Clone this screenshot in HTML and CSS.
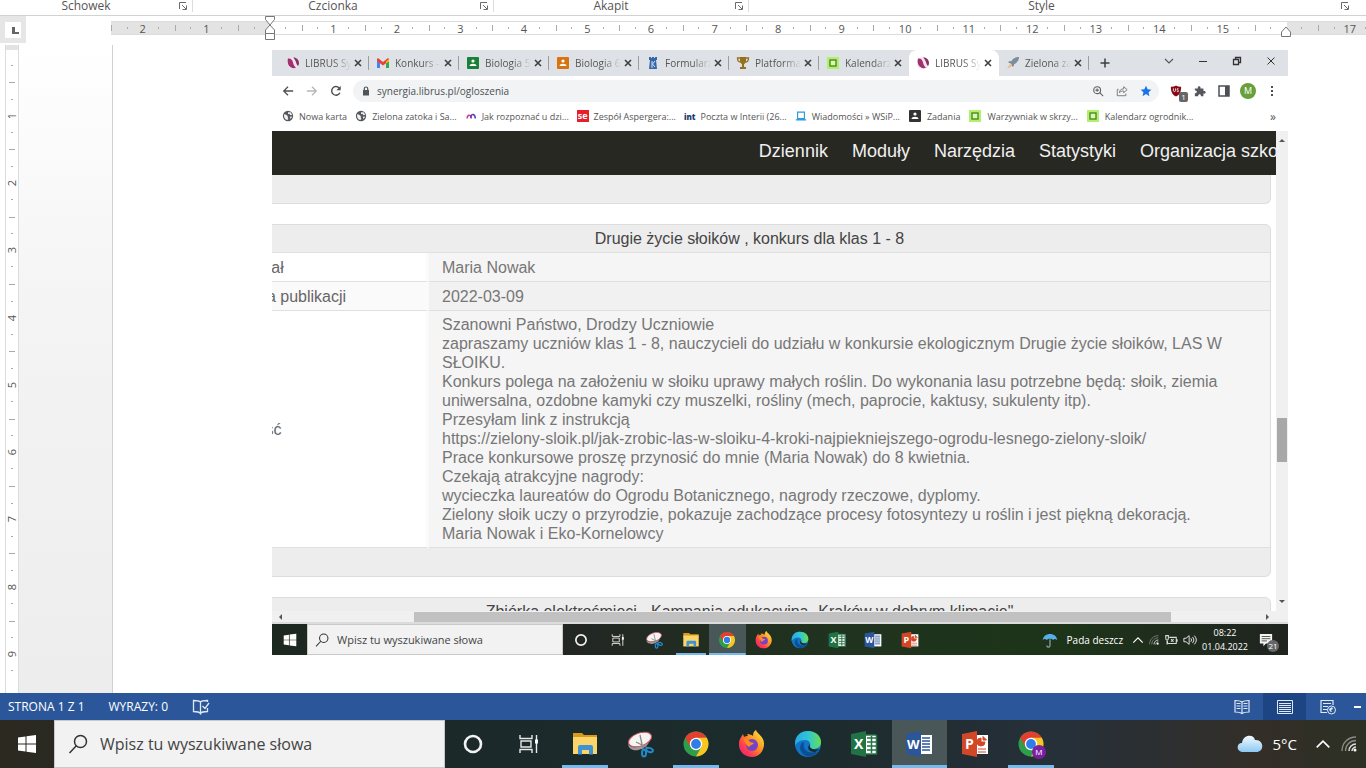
FILE: index.html
```html
<!DOCTYPE html>
<html lang="pl">

<head>
    <meta charset="UTF-8">
    <meta name="viewport" content="width=device-width, initial-scale=1.0">
    <title>Dokument</title>
    <link rel="stylesheet" href="styles.css">
</head>

<body>
    <svg class="sprite" width="0" height="0" aria-hidden="true">
        <defs>
            <linearGradient id="g-fox" x1="1" y1="0" x2="0" y2="1">
                <stop offset="0" stop-color="#fff44f" />
                <stop offset=".4" stop-color="#ff9a1f" />
                <stop offset=".7" stop-color="#ff3f4e" />
                <stop offset="1" stop-color="#e31587" />
            </linearGradient>
            <linearGradient id="g-edge" x1="0" y1="0" x2="1" y2="0">
                <stop offset="0" stop-color="#2aa8e0" />
                <stop offset=".5" stop-color="#30c4d8" />
                <stop offset="1" stop-color="#66df50" />
            </linearGradient>
            <linearGradient id="g-sky" x1="0" y1="0" x2="0" y2="1">
                <stop offset="0" stop-color="#f4faff" />
                <stop offset="1" stop-color="#8cc8f2" />
            </linearGradient>
        </defs>
        <symbol id="launcher" viewBox="0 0 10 10">
            <path d="M1.500 8V1.500H8M4 4l4 4M8.500 4.500v4h-4" fill="none" stroke="#6a6a6a" />
        </symbol>
        <symbol id="librus" viewBox="0 0 14 14">
            <circle cx="7" cy="7" r="6" fill="#f2e4ec" />
            <path d="M2 2.500C5 2 6.500 4 7 6.500s1.500 4 3 5C8 13 4 12 2.500 9 1.500 7 1.500 4 2 2.500z" fill="#a2306f" />
            <path d="M7 1.500c3-.5 6 2 6 5.500 0 1-.5 2.500-1 3C10.500 9 10.500 7 9.500 5S8 2 7 1.500z" fill="#8c2f60" />
        </symbol>
        <symbol id="gmail" viewBox="0 0 14 14">
            <path d="M1 12V3l3 2.500V12z" fill="#4285f4" />
            <path d="M10 12V5.500L13 3v9z" fill="#34a853" />
            <path d="M1 3l1-1 5 4 5-4 1 1v2L7 9.500 1 5z" fill="#ea4335" />
            <path d="M10 5.500L13 3v2.500l-3 2z" fill="#fbbc04" />
        </symbol>
        <symbol id="classroom" viewBox="0 0 14 14">
            <rect x="1" y="1" width="12" height="12" rx="1" fill="currentColor" />
            <circle cx="7" cy="5" r="1.600" fill="#fff" />
            <path d="M3.500 10c0-3 7-3 7 0z" fill="#fff" />
        </symbol>
        <symbol id="tower" viewBox="0 0 14 14">
            <path d="M3 1h2v1h1V1h2v1h1V1h2v3h-1l1 9H3l1-9H3z" fill="#3567a8" />
            <path d="M6 5v7M9 5L6.500 8 9 11" stroke="#d4e2f5" fill="none" />
        </symbol>
        <symbol id="cup" viewBox="0 0 14 14">
            <path d="M4 1h6v5L8 8.500V11h2v2H4v-2h2V8.500L4 6z" fill="#94711c" />
            <path d="M4 2H1.500c0 3 1 4 3 4M10 2h2.500c0 3-1 4-3 4" fill="none" stroke="#94711c" stroke-width="1.300" />
        </symbol>
        <symbol id="square" viewBox="0 0 14 14">
            <rect x="1" y="1" width="12" height="12" fill="#b2ee70" />
            <rect x="4" y="4" width="6" height="6" fill="#d8f9b0" stroke="#4e8a20" stroke-width="1.400" />
        </symbol>
        <symbol id="rocket" viewBox="0 0 14 14">
            <path d="M13 1C8 1 6 4 4 7l2 2c4-1 7-4 7-8z" fill="#7d8d99" />
            <path d="M5 5L2 6l2 1zM8 8l-1 3-1-2z" fill="#506070" />
            <path d="M4 8l-3 5 5-3z" fill="#f3b873" />
        </symbol>
        <symbol id="close" viewBox="0 0 10 10">
            <path d="M2 2l6 6M8 2L2 8" stroke="#3c4043" stroke-width="1.600" />
        </symbol>
        <symbol id="plus" viewBox="0 0 10 10">
            <path d="M5 .5v9M.5 5h9" stroke="#3c4043" stroke-width="1.500" />
        </symbol>
        <symbol id="down" viewBox="0 0 10 10">
            <path d="M1 3l4 4 4-4" fill="none" stroke="currentColor" stroke-width="1.100" />
        </symbol>
        <symbol id="up" viewBox="0 0 14 14">
            <path d="M1.500 10L7 4.500l5.500 5.500" fill="none" stroke="currentColor" stroke-width="1.400" />
        </symbol>
        <symbol id="minimize" viewBox="0 0 10 10">
            <path d="M1 5.500h8" stroke="#333" />
        </symbol>
        <symbol id="restore" viewBox="0 0 10 10">
            <path d="M1.500 3.500h5v5h-5zM3.500 3V1.500h5v5H7" fill="none" stroke="#333" stroke-width="1.300" />
        </symbol>
        <symbol id="exit" viewBox="0 0 10 10">
            <path d="M1.500 1.500l7 7M8.500 1.500l-7 7" stroke="#333" />
        </symbol>
        <symbol id="back" viewBox="0 0 14 14">
            <path d="M13 7H2M7 2L2 7l5 5" fill="none" stroke="currentColor" stroke-width="1.500" />
        </symbol>
        <symbol id="forward" viewBox="0 0 14 14">
            <path d="M1 7h11M7 2l5 5-5 5" fill="none" stroke="currentColor" stroke-width="1.500" />
        </symbol>
        <symbol id="reload" viewBox="0 0 14 14">
            <path d="M11.500 9A5 5 0 1 1 10.600 3.400" fill="none" stroke="currentColor" stroke-width="1.700" />
            <path d="M12.500 1v5h-5z" fill="currentColor" />
        </symbol>
        <symbol id="lock" viewBox="0 0 10 10">
            <path d="M2 4h6v5.500H2z" fill="#50555a" />
            <path d="M3.300 4V2.500c0-2 3.400-2 3.400 0V4" fill="none" stroke="#50555a" stroke-width="1.200" />
        </symbol>
        <symbol id="magnify" viewBox="0 0 14 14">
            <circle cx="6" cy="6" r="4" fill="none" stroke="#5f6368" stroke-width="1.300" />
            <path d="M9 9l4 4M4 6h4M6 4v4" stroke="#5f6368" stroke-width="1.300" />
        </symbol>
        <symbol id="share" viewBox="0 0 14 14">
            <path d="M3 5H1.500v7.500h10V10M4 9c0-3 2-4.500 5-4.500V2l4 3.500-4 3.500V7C7 7 5 7.500 4 9z" fill="none" stroke="#6a6e73" />
        </symbol>
        <symbol id="star" viewBox="0 0 14 14">
            <path d="M7 .8l1.900 4.200 4.400.4-3.300 3 1 4.600L7 10.600 3 13l1-4.600-3.300-3L5.100 5z" fill="#1a73e8" />
        </symbol>
        <symbol id="shield" viewBox="0 0 14 14">
            <path d="M7 .5c2 1.200 4 1.500 6 1.500 0 6-1.500 9-6 11.500C2.500 11 1 8 1 2c2 0 4-.3 6-1.500z" fill="#860b14" />
            <path d="M4 4v2.500c0 1.500 2.500 1.500 2.500 0V4m3.500.5c-2-1-2.500 1-1 1.500s1 2.500-1 1.500" fill="none" stroke="#fff" />
        </symbol>
        <symbol id="puzzle" viewBox="0 0 14 14">
            <path d="M1 4h3.500c-1-3.500 4-3.500 3 0H11v3c3.500-1 3.500 4 0 3v3H8c.5-3-3.500-3-3 0H1v-3.500c3 .5 3-3.500 0-3z" fill="#54585d" />
        </symbol>
        <symbol id="panel" viewBox="0 0 14 14">
            <path d="M2 2h10v10H2z" fill="none" stroke="#4c5055" stroke-width="1.500" />
            <path d="M8 2h4v10H8z" fill="#4c5055" />
        </symbol>
        <symbol id="dots" viewBox="0 0 14 14">
            <path d="M7 2v2M7 6v2M7 10v2" stroke="#4c5055" stroke-width="2" />
        </symbol>
        <symbol id="globe" viewBox="0 0 14 14">
            <circle cx="7" cy="7" r="6" fill="#54585d" />
            <path d="M2.500 5c2 0 3 1 4 2s-.5 2 1 3.500c-1 1.500-2 1-3 .5-1.500-1-2.500-3-2-6zM7 2.500h3l2 3-2 .5-1.500-1.500L7 5zM9 8l3-.5-2 3z" fill="#f1f1f1" />
        </symbol>
        <symbol id="arc" viewBox="0 0 14 14">
            <path d="M2.500 10c0-5 4.500-5 4.500-1" fill="none" stroke="#d23a86" stroke-width="1.800" />
            <path d="M7 10V8c0-4 5-4 5 2" fill="none" stroke="#6739b7" stroke-width="1.800" />
        </symbol>
        <symbol id="laptop" viewBox="0 0 14 14">
            <path d="M3 2.500h8V10H3zM1 11.500h12" fill="none" stroke="#2e9ae0" stroke-width="1.400" />
        </symbol>
        <symbol id="windows" viewBox="0 0 20 20">
            <path d="M1 3.500l7.500-1v7H1zM9.500 2.300L19 1v8.500H9.500zM1 10.500h7.500v7L1 16.500zM9.500 10.500H19V19l-9.500-1.300z" fill="#fff" />
        </symbol>
        <symbol id="search" viewBox="0 0 20 20">
            <circle cx="12.500" cy="7.500" r="6" fill="none" stroke="#333" stroke-width="1.500" />
            <path d="M8.300 11.800L1.500 19" stroke="#333" stroke-width="1.500" />
        </symbol>
        <symbol id="cortana" viewBox="0 0 28 28">
            <circle cx="14" cy="14" r="8" fill="none" stroke="#f2f2f2" stroke-width="2.600" />
        </symbol>
        <symbol id="taskview" viewBox="0 0 28 28">
            <path d="M5 5v3.500h12V5M5 23v-3.500h12V23M6 11h10v6H6zM21.500 5v18" fill="none" stroke="#e8e8e8" stroke-width="1.400" />
            <path d="M20 9.500h3v4h-3z" fill="#fff" />
        </symbol>
        <symbol id="explorer" viewBox="0 0 28 28">
            <path d="M2 3h9l2 2h13v4H2z" fill="#d99a1c" />
            <path d="M2 7h24v17H2z" fill="#fbd569" />
            <path d="M7 24.500V17q0-2 2-2h11q2 0 2 2v7.500h-4V20h-7v4.500z" fill="#3d93d3" />
        </symbol>
        <symbol id="snip" viewBox="0 0 28 28">
            <path d="M2 13c1 6 13 6 21-3l3-4-4 8c-6 8-20 9-20-1z" fill="#9b9b9b" />
            <ellipse cx="14" cy="9.500" rx="12" ry="6.500" transform="rotate(-20 14 9.500)" fill="#f6f3f3" stroke="#c9545b" />
            <path d="M14 5l3 14M10 12l12 6" stroke="#8a8a8a" stroke-width="1.300" />
            <ellipse cx="18" cy="23" rx="2" ry="3.500" fill="none" stroke="#2388cc" stroke-width="2" />
            <ellipse cx="23.500" cy="20" rx="3.500" ry="2" transform="rotate(20 23.500 20)" fill="none" stroke="#2388cc" stroke-width="2" />
        </symbol>
        <symbol id="chrome" viewBox="0 0 28 28">
            <circle cx="14" cy="14" r="12.500" fill="#2e9e4b" />
            <path d="M14 14L3.200 7.800A12.500 12.500 0 0 1 24.800 7.800z" fill="#e2402f" />
            <path d="M14 7.800h10.800A12.500 12.500 0 0 1 14 26.500l5.400-9.400z" fill="#fbc51f" />
            <path d="M3.200 7.800L8.600 17 14 14V7.800z" fill="#e2402f" />
            <circle cx="14" cy="14" r="6.200" fill="#fff" />
            <circle cx="14" cy="14" r="4.900" fill="#2f7de6" />
        </symbol>
        <symbol id="firefox" viewBox="0 0 28 28">
            <path d="M2 9l3-5 1 3c1-1 3-1 4-1L9 4c3 0 5 1 6 2 0-3 1-5 3-6 1 4 8 6 8 14 0 7-5 13-12 13S1 22 1 15c0-2 0-4 1-6z" fill="url(#g-fox)" />
            <circle cx="14" cy="15" r="6" fill="#7443c9" />
            <path d="M6 9c3 0 5 1 6 3l4 1c-1 2-4 2-5 4-2-1-5-5-5-8z" fill="#ff8a1c" />
        </symbol>
        <symbol id="edge" viewBox="0 0 28 28">
            <circle cx="14" cy="14" r="13" fill="#1174c8" />
            <path d="M1 14C1 5 7 1 14 1c8 0 13 5 13 11 0 5-4 7-8 7-3 0-4-1-3-3 1-3-1-6-5-6-5 0-9 3-10 6z" fill="url(#g-edge)" />
            <path d="M10 12c-2 8 5 13 14 9-4 7-12 7-16 2-4-5-1-11 2-11z" fill="#0c4f94" />
            <path d="M16 14c-4 4-1 8 5 8l5-3c-3 1-12 1-10-5z" fill="#1b2929" />
        </symbol>
        <symbol id="office" viewBox="0 0 28 28">
            <path d="M14 5h13v19H14z" fill="#fff" />
            <path d="M1 4l15-3v26L1 24z" fill="currentColor" />
        </symbol>
        <symbol id="excel" viewBox="0 0 28 28">
            <use href="#office" />
            <path d="M17 8h9M17 12h9M17 16h9M17 20h9M21.500 6v17M26.500 5v19H16M16 5h10" fill="none" stroke="currentColor" stroke-width="1.500" />
        </symbol>
        <symbol id="word" viewBox="0 0 28 28">
            <use href="#office" />
            <path d="M17 8h8M17 11h8M17 14h8M17 17h8M17 20h8" stroke="currentColor" stroke-width="1.300" />
        </symbol>
        <symbol id="powerpoint" viewBox="0 0 28 28">
            <use href="#office" />
            <path d="M20 8a4 4 0 1 0 4 4h-4zM22 6.500V10h3.500zM17 19h8M17 22h8" fill="currentColor" stroke="currentColor" stroke-width="1" />
        </symbol>
        <symbol id="umbrella" viewBox="0 0 20 20">
            <path d="M1 10C2 0 18 0 19 10c-3-2-4-1-5 0-2-2-6-2-8 0-1-1-3-2-5 0z" fill="#58aee8" />
            <path d="M10 9v8q0 2-2 2t-2-2" fill="none" stroke="#97a1a6" stroke-width="1.500" />
        </symbol>
        <symbol id="cloud" viewBox="0 0 26 20">
            <path d="M6 18c-7 0-7-9-1-9C6 0 17 0 18 6c9-1 10 12 1 12z" fill="url(#g-sky)" />
        </symbol>
        <symbol id="wifi" viewBox="0 0 16 16">
            <path d="M1 15C1 7 7 1 15 1M4.500 15C4.500 9 9 4.500 15 4.500" fill="none" stroke="#8b8b85" stroke-width="1.300" />
            <path d="M8 15c0-4 3-7 7-7M11 15c0-2 2-4 4-4" fill="none" stroke="#dcdcdc" stroke-width="1.500" />
            <circle cx="14" cy="14" r="1.500" fill="#fff" />
        </symbol>
        <symbol id="battery" viewBox="0 0 16 16">
            <path d="M6 5h8v7H4V9M15 7v3M2 3v3q0 2 1.500 2T5 6V3zM3.500 8v5M8 7l3 3M11 7l-3 3" fill="none" stroke="#dcdcdc" stroke-width="1.200" />
        </symbol>
        <symbol id="volume" viewBox="0 0 16 16">
            <path d="M1 6h2.500L7 3v10l-3.500-3H1zM9 6q1.500 2 0 4M11 4.500q3 3.500 0 7M13 3q4.500 5 0 10" fill="none" stroke="#e5e5e5" stroke-width="1.100" />
        </symbol>
        <symbol id="note" viewBox="0 0 16 16">
            <path d="M1 1h14v11H8l-3 3v-3H1z" fill="#f4f4f4" />
            <path d="M3 4h10M3 6.500h10M3 9h6" stroke="#40473e" />
        </symbol>
        <symbol id="proof" viewBox="0 0 18 16">
            <path d="M8.500 14.500V3Q7 1.500 1.500 1.500v11q5.500 0 7 2zm0 0q1-2 7-2V9M8.500 3q1-1.500 7-1.500V3M10.500 7l2.500 2.500L17 4" fill="none" stroke="#dfe8f5" stroke-width="1.300" />
        </symbol>
        <symbol id="read" viewBox="0 0 16 16">
            <path d="M8 14V3Q6 1.500 1 1.500V13q5 0 7 1.500Q10 13 15 13V1.500q-5 0-7 1.500M2.500 4.500h4M2.500 7h4M2.500 9.500h4M9.500 4.500h4M9.500 7h4M9.500 9.500h4" fill="none" stroke="#dfe8f5" stroke-width="1.200" />
        </symbol>
        <symbol id="print" viewBox="0 0 16 16">
            <path d="M.5 1.500h15v13H.5zM2 4.500h12M2 6.500h12M2 8.500h12M2 10.500h12M2 12.500h12" fill="none" stroke="#dfe8f5" />
        </symbol>
        <symbol id="web" viewBox="0 0 16 16">
            <path d="M7 13.500H1v-12h12V6M3 4.500h8M3 7.500h5M3 10.500h4" fill="none" stroke="#dfe8f5" stroke-width="1.200" />
            <circle cx="11.500" cy="11" r="4" fill="#2b579a" stroke="#dfe8f5" />
            <path d="M9 10l3-2 1 2-2 1 1 2-2-.5z" fill="#dfe8f5" />
        </symbol>
        <symbol id="indent" viewBox="0 0 12 26">
            <path d="M1.500 1.500h9v3L6 10 1.500 4.500zM6 10l4.500 5v3.500h-9V15zM1.500 18.500h9v6h-9z" fill="#fff" stroke="#777" />
        </symbol>
        <symbol id="indent-right" viewBox="0 0 12 26">
            <path d="M6 12l4.500 5v4.500h-9V17z" fill="#fff" stroke="#777" />
        </symbol>
    </svg>

    <header class="ribbon">
        <div class="group"><span>Schowek</span><button class="icon-btn" aria-label="Schowek"><svg class="i10"><use href="#launcher" /></svg></button></div>
        <div class="group"><span>Czcionka</span><button class="icon-btn" aria-label="Czcionka"><svg class="i10"><use href="#launcher" /></svg></button></div>
        <div class="group"><span>Akapit</span><button class="icon-btn" aria-label="Akapit"><svg class="i10"><use href="#launcher" /></svg></button></div>
        <div class="group"><span>Style</span><button class="icon-btn" aria-label="Style"><svg class="i10"><use href="#launcher" /></svg></button></div>
    </header>

    <div class="ruler-row">
        <button class="corner" aria-label="Tabulator"><span></span></button>
        <ol class="ruler">
            <li>2</li>
            <li>1</li>
            <li><svg class="indent"><use href="#indent" /></svg></li>
            <li>1</li>
            <li>2</li>
            <li>3</li>
            <li>4</li>
            <li>5</li>
            <li>6</li>
            <li>7</li>
            <li>8</li>
            <li>9</li>
            <li>10</li>
            <li>11</li>
            <li>12</li>
            <li>13</li>
            <li>14</li>
            <li>15</li>
            <li><svg class="indent"><use href="#indent-right" /></svg></li>
            <li>17</li>
        </ol>
    </div>

    <main class="workspace">
        <ol class="side-ruler">
            <li>1</li>
            <li>2</li>
            <li>3</li>
            <li>4</li>
            <li>5</li>
            <li>6</li>
            <li>7</li>
            <li>8</li>
            <li>9</li>
        </ol>
        <div class="gutter"></div>
        <div class="paper">
            <section class="screen">
                <div class="tabs">
                    <div class="tab"><svg class="i14"><use href="#librus" /></svg><span>LIBRUS Sy</span><button class="icon-btn" aria-label="Zamknij"><svg class="i10"><use href="#close" /></svg></button></div>
                    <div class="tab"><svg class="i14"><use href="#gmail" /></svg><span>Konkurs -</span><button class="icon-btn" aria-label="Zamknij"><svg class="i10"><use href="#close" /></svg></button></div>
                    <div class="tab"><svg class="i14 green"><use href="#classroom" /></svg><span>Biologia 5</span><button class="icon-btn" aria-label="Zamknij"><svg class="i10"><use href="#close" /></svg></button></div>
                    <div class="tab"><svg class="i14 orange"><use href="#classroom" /></svg><span>Biologia 6</span><button class="icon-btn" aria-label="Zamknij"><svg class="i10"><use href="#close" /></svg></button></div>
                    <div class="tab"><svg class="i14"><use href="#tower" /></svg><span>Formularz</span><button class="icon-btn" aria-label="Zamknij"><svg class="i10"><use href="#close" /></svg></button></div>
                    <div class="tab"><svg class="i14"><use href="#cup" /></svg><span>Platforma</span><button class="icon-btn" aria-label="Zamknij"><svg class="i10"><use href="#close" /></svg></button></div>
                    <div class="tab before-active"><svg class="i14"><use href="#square" /></svg><span>Kalendarz</span><button class="icon-btn" aria-label="Zamknij"><svg class="i10"><use href="#close" /></svg></button></div>
                    <div class="tab active"><svg class="i14"><use href="#librus" /></svg><span>LIBRUS Sy</span><button class="icon-btn" aria-label="Zamknij"><svg class="i10"><use href="#close" /></svg></button></div>
                    <div class="tab"><svg class="i14"><use href="#rocket" /></svg><span>Zielona za</span><button class="icon-btn" aria-label="Zamknij"><svg class="i10"><use href="#close" /></svg></button></div>
                    <button class="icon-btn new-tab" aria-label="Nowa karta"><svg class="i10"><use href="#plus" /></svg></button>
                    <div class="window-btns">
                        <button class="icon-btn" aria-label="Karty"><svg class="i10"><use href="#down" /></svg></button>
                        <button class="icon-btn" aria-label="Minimalizuj"><svg class="i10"><use href="#minimize" /></svg></button>
                        <button class="icon-btn" aria-label="Przywróć"><svg class="i10"><use href="#restore" /></svg></button>
                        <button class="icon-btn" aria-label="Zamknij okno"><svg class="i10"><use href="#exit" /></svg></button>
                    </div>
                </div>

                <div class="toolbar">
                    <button class="icon-btn" aria-label="Wstecz"><svg class="i12"><use href="#back" /></svg></button>
                    <button class="icon-btn faded" aria-label="Dalej"><svg class="i12"><use href="#forward" /></svg></button>
                    <button class="icon-btn" aria-label="Odśwież"><svg class="i12"><use href="#reload" /></svg></button>
                    <div class="omnibox">
                        <svg class="i10"><use href="#lock" /></svg>
                        <input type="text" value="synergia.librus.pl/ogloszenia" aria-label="Adres">
                        <button class="icon-btn" aria-label="Powiększenie"><svg class="i12"><use href="#magnify" /></svg></button>
                        <button class="icon-btn" aria-label="Udostępnij"><svg class="i12"><use href="#share" /></svg></button>
                        <button class="icon-btn" aria-label="Zakładka"><svg class="i12"><use href="#star" /></svg></button>
                    </div>
                    <button class="icon-btn shield" aria-label="uBlock"><svg class="i12"><use href="#shield" /></svg><span class="count">1</span></button>
                    <button class="icon-btn" aria-label="Rozszerzenia"><svg class="i12"><use href="#puzzle" /></svg></button>
                    <button class="icon-btn" aria-label="Panel boczny"><svg class="i14"><use href="#panel" /></svg></button>
                    <button class="avatar">M</button>
                    <button class="icon-btn" aria-label="Menu"><svg class="i14"><use href="#dots" /></svg></button>
                </div>

                <nav class="bookmarks">
                    <a href="#"><svg class="i12"><use href="#globe" /></svg>Nowa karta</a>
                    <a href="#"><svg class="i12"><use href="#globe" /></svg>Zielona zatoka i Sa...</a>
                    <a href="#"><svg class="i12"><use href="#arc" /></svg>Jak rozpoznać u dzi...</a>
                    <a href="#"><b class="se">se</b>Zespół Aspergera:...</a>
                    <a href="#"><b class="int">int</b>Poczta w Interii (26...</a>
                    <a href="#"><svg class="i12"><use href="#laptop" /></svg>Wiadomości » WSiP...</a>
                    <a href="#"><svg class="i14 dark"><use href="#classroom" /></svg>Zadania</a>
                    <a href="#"><svg class="i14"><use href="#square" /></svg>Warzywniak w skrzy...</a>
                    <a href="#"><svg class="i14"><use href="#square" /></svg>Kalendarz ogrodnik...</a>
                    <button class="more">»</button>
                </nav>

                <div class="view">
                    <div class="site">
                        <nav class="menu">
                            <a href="#">Dziennik</a>
                            <a href="#">Moduły</a>
                            <a href="#">Narzędzia</a>
                            <a href="#">Statystyki</a>
                            <a href="#">Organizacja szkoły</a>
                        </nav>
                        <div class="card-end"></div>
                        <table class="notice">
                            <thead>
                                <tr>
                                    <th colspan="2">Drugie życie słoików , konkurs dla klas 1 - 8</th>
                                </tr>
                            </thead>
                            <tbody>
                                <tr>
                                    <th>Dodał</th>
                                    <td>Maria Nowak</td>
                                </tr>
                                <tr class="alt">
                                    <th>Data publikacji</th>
                                    <td>2022-03-09</td>
                                </tr>
                                <tr class="message">
                                    <th>Treść</th>
                                    <td>
                                        Szanowni Państwo, Drodzy Uczniowie<br>
                                        zapraszamy uczniów klas 1 - 8, nauczycieli do udziału w konkursie ekologicznym Drugie życie słoików, LAS W<br>
                                        SŁOIKU.<br>
                                        Konkurs polega na założeniu w słoiku uprawy małych roślin. Do wykonania lasu potrzebne będą: słoik, ziemia<br>
                                        uniwersalna, ozdobne kamyki czy muszelki, rośliny (mech, paprocie, kaktusy, sukulenty itp).<br>
                                        Przesyłam link z instrukcją<br>
                                        https://zielony-sloik.pl/jak-zrobic-las-w-sloiku-4-kroki-najpiekniejszego-ogrodu-lesnego-zielony-sloik/<br>
                                        Prace konkursowe proszę przynosić do mnie (Maria Nowak) do 8 kwietnia.<br>
                                        Czekają atrakcyjne nagrody:<br>
                                        wycieczka laureatów do Ogrodu Botanicznego, nagrody rzeczowe, dyplomy.<br>
                                        Zielony słoik uczy o przyrodzie, pokazuje zachodzące procesy fotosyntezy u roślin i jest piękną dekoracją.<br>
                                        Maria Nowak i Eko-Kornelowcy
                                    </td>
                                </tr>
                            </tbody>
                            <tfoot>
                                <tr>
                                    <td colspan="2"></td>
                                </tr>
                            </tfoot>
                        </table>
                        <table class="notice">
                            <thead>
                                <tr>
                                    <th colspan="2">Zbiórka elektrośmieci - Kampania edukacyjna „Kraków w dobrym klimacie"</th>
                                </tr>
                            </thead>
                        </table>
                    </div>
                    <div class="vscroll"><i class="arrow top"></i><i class="thumb"></i><i class="arrow bottom"></i></div>
                    <div class="hscroll"><i class="arrow left"></i><i class="thumb"></i><i class="arrow right"></i></div>
                </div>

                <div class="taskbar small">
                    <button class="start" aria-label="Start"><svg class="i14"><use href="#windows" /></svg></button>
                    <label class="search"><svg class="i14"><use href="#search" /></svg><input type="text" placeholder="Wpisz tu wyszukiwane słowa" aria-label="Szukaj"></label>
                    <div class="apps">
                        <button aria-label="Cortana"><svg><use href="#cortana" /></svg></button>
                        <button aria-label="Widok zadań"><svg><use href="#taskview" /></svg></button>
                        <button aria-label="Narzędzie Wycinanie"><svg><use href="#snip" /></svg></button>
                        <button class="open" aria-label="Eksplorator"><svg><use href="#explorer" /></svg></button>
                        <button class="open current" aria-label="Chrome"><svg><use href="#chrome" /></svg></button>
                        <button aria-label="Firefox"><svg><use href="#firefox" /></svg></button>
                        <button aria-label="Edge"><svg><use href="#edge" /></svg></button>
                        <button class="xl" aria-label="Excel"><svg viewBox="0 0 28 28"><use href="#excel" /><text x="4" y="19">X</text></svg></button>
                        <button class="wd" aria-label="Word"><svg viewBox="0 0 28 28"><use href="#word" /><text x="2" y="19">W</text></svg></button>
                        <button class="pp" aria-label="PowerPoint"><svg viewBox="0 0 28 28"><use href="#powerpoint" /><text x="4" y="19">P</text></svg></button>
                    </div>
                    <div class="tray">
                        <svg class="i16"><use href="#umbrella" /></svg>
                        <span class="weather">Pada deszcz</span>
                        <svg class="i12"><use href="#up" /></svg>
                        <svg class="i10"><use href="#wifi" /></svg>
                        <svg class="i14"><use href="#battery" /></svg>
                        <svg class="i14"><use href="#volume" /></svg>
                        <time>08:22<br>01.04.2022</time>
                        <button class="icon-btn note" aria-label="Powiadomienia"><svg class="i14"><use href="#note" /></svg><span class="count">21</span></button>
                    </div>
                </div>
            </section>
        </div>
    </main>

    <footer class="status">
        <span>STRONA 1 Z 1</span>
        <span>WYRAZY: 0</span>
        <button class="icon-btn" aria-label="Sprawdzanie"><svg class="i18"><use href="#proof" /></svg></button>
        <div class="modes">
            <button class="icon-btn" aria-label="Czytanie"><svg class="i16"><use href="#read" /></svg></button>
            <button class="icon-btn selected" aria-label="Układ wydruku"><svg class="i16"><use href="#print" /></svg></button>
            <button class="icon-btn" aria-label="Układ sieci Web"><svg class="i16"><use href="#web" /></svg></button>
            <button class="icon-btn zoom-out" aria-label="Pomniejsz"><i></i></button>
        </div>
    </footer>

    <div class="taskbar">
        <button class="start" aria-label="Start"><svg class="i20"><use href="#windows" /></svg></button>
        <label class="search"><svg class="i20"><use href="#search" /></svg><input type="text" placeholder="Wpisz tu wyszukiwane słowa" aria-label="Szukaj"></label>
        <div class="apps">
            <button aria-label="Cortana"><svg><use href="#cortana" /></svg></button>
            <button aria-label="Widok zadań"><svg><use href="#taskview" /></svg></button>
            <button class="open" aria-label="Eksplorator"><svg><use href="#explorer" /></svg></button>
            <button aria-label="Narzędzie Wycinanie"><svg><use href="#snip" /></svg></button>
            <button class="open" aria-label="Chrome"><svg><use href="#chrome" /></svg></button>
            <button aria-label="Firefox"><svg><use href="#firefox" /></svg></button>
            <button aria-label="Edge"><svg><use href="#edge" /></svg></button>
            <button class="xl" aria-label="Excel"><svg viewBox="0 0 28 28"><use href="#excel" /><text x="4" y="19">X</text></svg></button>
            <button class="open current wd" aria-label="Word"><svg viewBox="0 0 28 28"><use href="#word" /><text x="2" y="19">W</text></svg></button>
            <button class="pp" aria-label="PowerPoint"><svg viewBox="0 0 28 28"><use href="#powerpoint" /><text x="4" y="19">P</text></svg></button>
            <button class="open profile" aria-label="Chrome, profil M"><svg><use href="#chrome" /></svg><span class="badge">M</span></button>
        </div>
        <div class="tray">
            <svg class="i26"><use href="#cloud" /></svg>
            <span class="weather">5°C</span>
            <svg class="i16"><use href="#up" /></svg>
            <svg class="i16"><use href="#wifi" /></svg>
        </div>
    </div>
</body>

</html>
```

FILE: styles.css
```css
* {
    box-sizing: border-box;
}

body {
    display: flex;
    flex-direction: column;
    height: 100vh;
    margin: 0;
    overflow: hidden;
    background-color: #fff;
    color: #555;
    font-family: "Open Sans", "Noto Sans", sans-serif;
    font-size: 12px;
}

button,
input {
    margin: 0;
    padding: 0;
    border: 0;
    background: none;
    color: inherit;
    font: inherit;
}

ol {
    margin: 0;
    padding: 0;
    list-style: none;
}

a {
    color: inherit;
    text-decoration: none;
}

svg {
    display: block;
    flex: none;
}

.sprite {
    position: absolute;
}

.i10 { width: 10px; height: 10px; }
.i12 { width: 12px; height: 12px; }
.i14 { width: 14px; height: 14px; }
.i16 { width: 16px; height: 16px; }
.i18 { width: 18px; height: 16px; }
.i20 { width: 20px; height: 20px; }
.i26 { width: 26px; height: 20px; }

.green { color: #188038; }
.orange { color: #d9730d; }
.dark { color: #333; }

.icon-btn {
    display: grid;
    place-items: center;
}

/* ribbon */
.ribbon {
    display: grid;
    flex: none;
    grid-template-columns: 193px 301px 255px 1fr;
    height: 16px;
    border-bottom: 1px solid #d2d2d2;
}

.group {
    display: flex;
    align-items: center;
    height: 12px;
    padding-right: 4px;
    border-right: 1px solid #dcdcdc;
    line-height: 12px;
}

.group:last-child {
    padding-right: 16px;
    border: 0;
}

.group span {
    flex: 1;
    padding-right: 6px;
    text-align: center;
}

/* rulers */
.ruler-row {
    display: flex;
    flex: none;
    height: 29px;
}

.corner {
    display: grid;
    place-items: center;
    width: 26px;
    height: 27px;
    margin-right: 85px;
    background-color: #e6e6e6;
}

.corner span {
    width: 16px;
    height: 16px;
    border: solid #fff;
    border-width: 5px 2px 4px 7px;
    background: linear-gradient(#666, #666) left / 3px 100% no-repeat, linear-gradient(#666, #666) bottom / 100% 2px no-repeat #fff;
}

.ruler {
    --unit: calc(100% / 19.75);
    display: flex;
    flex: 1;
    height: 14px;
    margin-top: 5px;
    border: solid #ddd;
    border-width: 1px 0;
    background: linear-gradient(to right, #e3e3e3 12.66%, #fff 12.66%, #fff 93.67%, #e3e3e3 93.67%);
}

.ruler li {
    display: flex;
    flex: 0 0 var(--unit);
    align-items: center;
    justify-content: center;
    background:
        linear-gradient(#aaa, #aaa) 0 50% / 1px 6px no-repeat,
        linear-gradient(#aaa, #aaa) 25% 50% / 1px 2px no-repeat,
        linear-gradient(#aaa, #aaa) 75% 50% / 1px 2px no-repeat;
    font-size: 11px;
}

.indent {
    width: 12px;
    height: 26px;
}

.side-ruler {
    display: flex;
    flex-direction: column;
    width: 14px;
    margin-left: 5px;
    padding: 37px 0 5px;
    border: solid #dcdcdc;
    border-width: 0 1px;
    background: linear-gradient(#e3e3e3, #e3e3e3) top / 100% 5px no-repeat, linear-gradient(#aaa, #aaa) 50% 20px / 2px 1px no-repeat;
}

.side-ruler li {
    display: flex;
    flex: 1;
    align-items: center;
    justify-content: center;
    background:
        linear-gradient(#aaa, #aaa) 50% 0 / 6px 1px no-repeat,
        linear-gradient(#aaa, #aaa) 50% 25% / 2px 1px no-repeat,
        linear-gradient(#aaa, #aaa) 50% 75% / 2px 1px no-repeat;
    font-size: 11px;
    line-height: 12px;
    writing-mode: sideways-lr;
}

/* document */
.workspace {
    display: flex;
    flex: 1;
    min-height: 0;
}

.gutter {
    width: 94px;
    border-right: 1px solid #d2d2d2;
    background: linear-gradient(#fff, #f4f4f4 40%, #ededed);
}

.paper {
    display: flex;
    flex: 1;
    min-width: 0;
    padding: 5px 78px 38px 159px;
}

.screen {
    display: flex;
    flex: 1;
    flex-direction: column;
    min-width: 0;
    min-height: 0;
    background-color: #fff;
}

/* browser */
.tabs {
    display: flex;
    flex: none;
    height: 26px;
    padding-left: 7px;
    background-color: #dee1e6;
    font-size: 10px;
}

.tab {
    display: flex;
    flex: 0 0 90px;
    align-items: center;
    min-width: 0;
    padding: 0 6px 0 7px;
    background: linear-gradient(#9a9ea3, #9a9ea3) right / 1px 14px no-repeat;
}

.tab span {
    flex: 1;
    min-width: 0;
    margin: 0 2px 0 5px;
    overflow: hidden;
    white-space: nowrap;
    mask-image: linear-gradient(to right, #000 60%, transparent);
}

.before-active {
    background: none;
}

.tab.active {
    border-radius: 8px 8px 0 0;
    background: #fff;
}

.new-tab {
    width: 32px;
}

.window-btns {
    display: flex;
    margin-left: auto;
    padding-bottom: 4px;
}

.window-btns button {
    width: 34px;
}

.toolbar {
    display: flex;
    flex: none;
    align-items: center;
    height: 29px;
    padding: 0 4px;
    color: #4c5055;
}

.toolbar > .icon-btn {
    width: 24px;
}

.toolbar > .faded {
    color: #b5b8bb;
}

.omnibox {
    display: flex;
    flex: 1;
    align-items: center;
    height: 22px;
    margin: 0 5px;
    padding: 0 1px 0 8px;
    border-radius: 11px;
    background-color: #f1f3f4;
}

.omnibox input {
    flex: 1;
    min-width: 0;
    margin-left: 6px;
    font-size: 10px;
}

.omnibox button {
    width: 24px;
}

.shield,
.note,
.profile {
    position: relative;
}

.count {
    position: absolute;
    right: 0;
    bottom: -5px;
    width: 9px;
    border-radius: 2px;
    background-color: #666;
    color: #fff;
    font-size: 8px;
    line-height: 10px;
    text-align: center;
}

.avatar {
    width: 16px;
    height: 16px;
    margin: 0 4px;
    border-radius: 50%;
    background-color: #689f38;
    color: #fff;
    font-size: 9px;
}

.bookmarks {
    display: flex;
    flex: none;
    align-items: center;
    gap: 8px;
    height: 26px;
    padding: 0 12px 4px 10px;
    font-size: 9px;
    white-space: nowrap;
}

.bookmarks a {
    display: flex;
    align-items: center;
    gap: 5px;
}

.se {
    padding: 0 1px;
    background-color: #e5202b;
    color: #fff;
    line-height: 12px;
}

.int {
    color: #1d3c6e;
    font-weight: 800;
    font-size: 8px;
}

.more {
    margin-left: auto;
    font-size: 12px;
}

.view {
    display: grid;
    flex: 1;
    grid-template-columns: minmax(0, 1fr) 12px;
    grid-template-rows: minmax(0, 1fr) 13px;
    min-height: 0;
}

.site {
    overflow: hidden;
    padding-right: 5px;
    background-color: #fff;
    color: #777;
    font-family: "Liberation Sans", Arial, sans-serif;
    font-size: 16px;
    line-height: 19px;
}

.menu {
    display: flex;
    justify-content: flex-end;
    gap: 24px;
    height: 44px;
    margin-right: -5px;
    background-color: #282823;
    color: #f0f0f0;
    font-size: 18px;
    line-height: 41px;
    white-space: nowrap;
}

.menu a:last-child {
    width: 136px;
}

.card-end {
    height: 29px;
    margin-bottom: 20px;
    border: 1px solid #ddd;
    border-width: 0 1px 1px 0;
    border-radius: 0 0 6px 0;
    background-color: #ededed;
}

/* the table is scrolled sideways, its left edge lies outside the view */
.notice {
    width: calc(100% + 44px);
    margin: 0 0 20px -44px;
    border: 1px solid #ddd;
    border-radius: 6px;
    border-spacing: 0;
    background-color: #ededed;
    white-space: nowrap;
    overflow: hidden;
}

.notice th,
.notice td {
    padding: 4px 14px;
    border-bottom: 1px solid #e0e0e0;
    font-weight: 400;
    text-align: left;
}

.notice thead th {
    color: #444;
    text-align: center;
}

.notice tbody th,
.notice tbody td {
    padding: 5px 13px 4px;
}

.notice .message th,
.notice .message td {
    padding-top: 4px;
}

.notice tbody th {
    width: 200px;
    border-right: 3px solid #fafafa;
    background-color: #fff;
    color: #666;
}

.notice tbody td {
    background-color: #f5f5f5;
}

.notice .alt th {
    background-color: #fafafa;
}

.notice .alt td {
    background-color: #f1f1f1;
}

.notice tfoot td {
    height: 28px;
    border: 0;
}

.vscroll,
.hscroll {
    display: flex;
    align-items: center;
    background-color: #f0f0f0;
}

.vscroll {
    flex-direction: column;
    padding: 5px 0;
}

.vscroll .thumb {
    width: 10px;
    height: 44px;
    margin-top: 276px;
    margin-bottom: auto;
    background-color: #a8a8a8;
}

.hscroll {
    grid-column: 1 / -1;
    padding: 0 16px 0 4px;
    border-bottom: 2px solid #dcdcdc;
}

.hscroll .thumb {
    width: 76%;
    height: 10px;
    margin: 0 auto 0 132px;
    background-color: #c1c1c1;
}

.arrow {
    border: 3px solid transparent;
}

.arrow.top { border-bottom-color: #555; }
.arrow.bottom { border-top-color: #555; }
.arrow.left { border-right-color: #555; }
.arrow.right { border-left-color: #555; }

/* status bar */
.status {
    display: flex;
    flex: none;
    align-items: center;
    gap: 24px;
    height: 27px;
    padding-left: 8px;
    background-color: #2b579a;
    color: #fff;
}

.modes {
    display: flex;
    align-self: stretch;
    margin-left: auto;
}

.modes button {
    width: 43px;
}

.modes .selected {
    background-color: #1e4583;
}

.modes .zoom-out {
    width: 17px;
}

.zoom-out i {
    width: 7px;
    height: 2px;
    background-color: #fff;
}

/* taskbar */
.taskbar {
    display: flex;
    flex: none;
    height: 48px;
    background: linear-gradient(to right, #2c2920, #1b2929 30%, #1c2b2d 60%, #263039 78%, #332e28 92%, #2d3024);
    color: #fff;
}

.start {
    display: grid;
    place-items: center;
    width: 54px;
}

.search {
    display: flex;
    align-items: center;
    gap: 12px;
    width: 391px;
    padding-left: 13px;
    border: 1px solid #c9c9c9;
    background-color: #f2f2f2;
}

.search input {
    flex: 1;
    min-width: 0;
    font-size: 16px;
}

.search input::placeholder {
    color: #444;
    opacity: 1;
}

.apps {
    display: flex;
    width: 614px;
}

.apps button {
    display: grid;
    flex: 1;
    place-items: center;
}

.apps svg {
    width: 28px;
    height: 28px;
}

.apps text {
    fill: #fff;
    font-size: 14px;
    font-weight: 700;
}

.apps .open {
    background: linear-gradient(#76b9ed, #76b9ed) bottom / 46px 3px no-repeat;
}

.apps .current {
    background: linear-gradient(#76b9ed, #76b9ed) bottom / 100% 3px no-repeat #4a5759;
}

.xl { color: #217346; }
.wd { color: #2b579a; }
.pp { color: #d24726; }

.wd text {
    font-size: 13px;
}

.badge {
    position: absolute;
    right: 13px;
    bottom: 9px;
    width: 14px;
    border-radius: 50%;
    background-color: #7b1fa2;
    font-size: 8px;
    line-height: 14px;
}

.tray {
    display: flex;
    align-items: center;
    gap: 10px;
    margin-left: auto;
    padding-right: 9px;
}

.tray .weather {
    margin-right: 8px;
    font-size: 15px;
}

.small {
    height: 31px;
    background: linear-gradient(to right, #1c2820, #222723 30%, #20331f 55%, #1d3419 78%, #202420);
}

.small .start {
    width: 35px;
}

.small .search {
    gap: 8px;
    width: 256px;
    padding-left: 7px;
}

.small .search input {
    font-size: 11px;
}

.small .apps {
    width: 365px;
}

.small .apps svg {
    width: 18px;
    height: 18px;
}

.small .apps .open {
    background-size: 30px 2px;
}

.small .apps .current {
    background-size: 100% 2px;
}

.small .tray {
    gap: 5px;
    font-size: 9px;
}

.small .weather {
    margin: 0 4px;
    font-size: 10px;
}

.small time {
    line-height: 14px;
    text-align: center;
}

.note {
    width: 26px;
    height: 24px;
}

.note .count {
    bottom: 0;
    width: 12px;
    border-radius: 50%;
    line-height: 12px;
}
```
